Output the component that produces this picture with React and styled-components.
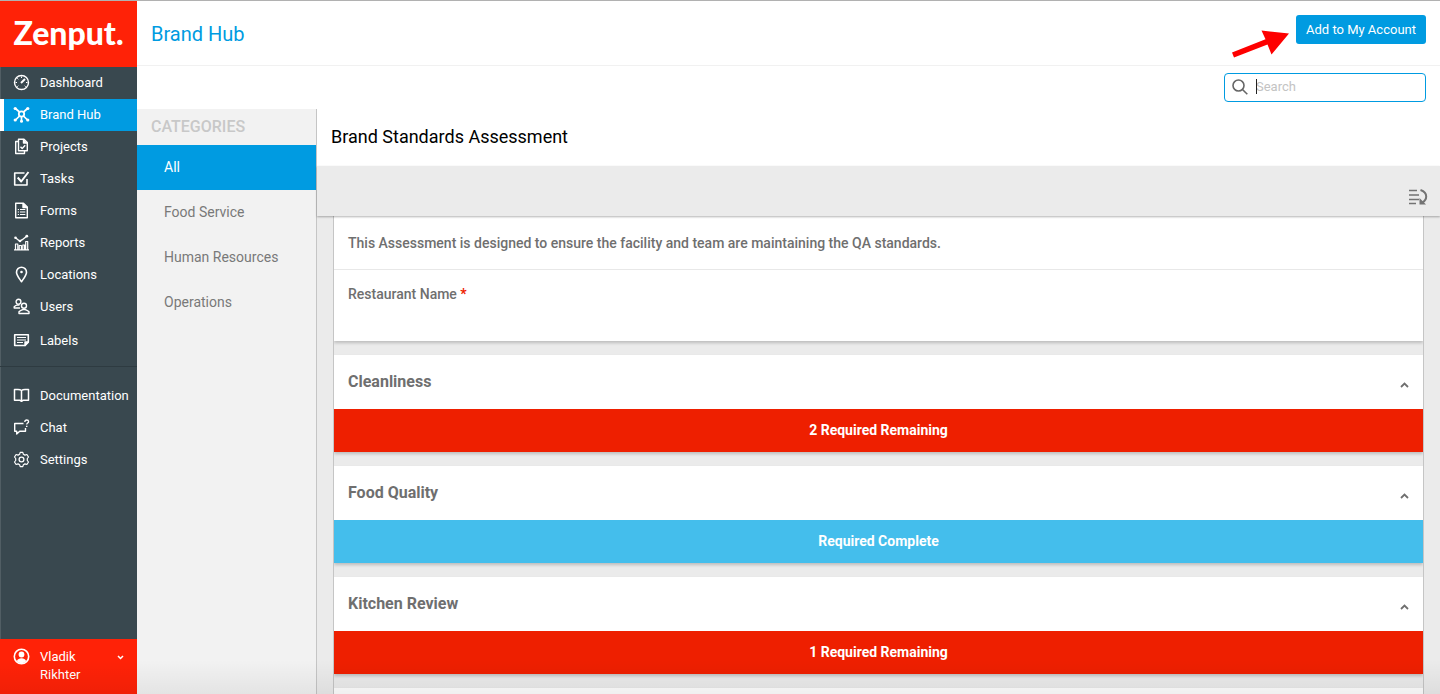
import React from 'react';
import styled, { createGlobalStyle, css } from 'styled-components';

const blue = '#009be1';
const red = '#ff2207';
const slate = '#39484f';
const grey = '#ebebeb';

const GlobalStyle = createGlobalStyle`
  *, *::before, *::after { box-sizing: border-box; }
  body {
    margin: 0;
    font-family: Roboto, "Liberation Sans", sans-serif;
    font-size: 13px;
    color: #6f6f6f;
    background: #fff;
  }
  button, input { font: inherit; }
  h1, h2, h3, p, ul { margin: 0; padding: 0; }
  ul { list-style: none; }
`;

const Shell = styled.div`
  position: relative;
  display: flex;
  height: 100vh;
  border-top: 1px solid #b1b1b1;
  overflow: hidden;
`;

const Sidebar = styled.aside`
  flex: 0 0 137px;
  display: flex;
  flex-direction: column;
  background: ${slate};
  box-shadow: inset 1px 0 0 rgba(255, 255, 255, 0.12);
`;

const Brand = styled.a`
  flex: 0 0 66px;
  display: flex;
  align-items: center;
  justify-content: center;
  padding-bottom: 2px;
  background: ${red};
  color: #fff;
  font-family: Lato, Roboto, sans-serif;
  font-size: 32px;
  font-weight: 900;
  line-height: 40px;
  text-decoration: none;
`;

const NavList = styled.ul`
  padding-bottom: ${p => (p.$divided ? '9px' : 0)};
  border-bottom: ${p => (p.$divided ? '1px solid #2e3b41' : '0')};
  padding-top: ${p => (p.$divided ? 0 : '13px')};
  li:nth-child(9) { padding-top: 2px; }
`;

const NavLink = styled.a`
  display: flex;
  align-items: center;
  gap: 10px;
  height: 32px;
  padding-left: 9px;
  border-left: 4px solid transparent;
  color: #fff;
  font-size: 13px;
  line-height: 18px;
  text-decoration: none;
  ${p => p.$active && css`
    background: ${blue};
    border-left-color: #fff;
  `}
`;

const NavIcon = styled.svg`
  flex: 0 0 17px;
  width: 17px;
  height: 19px;
  padding-bottom: 2px;
  fill: none;
  stroke: currentColor;
  stroke-width: 1.4;
  stroke-linejoin: round;
`;

const UserButton = styled.button`
  display: flex;
  align-items: flex-start;
  gap: 10px;
  margin-top: auto;
  height: 55px;
  padding: 9px 11px 0 13px;
  border: 0;
  background: ${red};
  color: #fff;
  font-size: 13px;
  line-height: 18px;
  text-align: left;
`;

const UserName = styled.span`
  flex: 1;
`;

const Chevron = styled.svg`
  width: 11px;
  height: 18px;
  fill: none;
  stroke: currentColor;
  stroke-width: ${p => p.$weight || 1.5};
`;

const Main = styled.main`
  flex: 1;
  min-width: 0;
  display: flex;
  flex-direction: column;
`;

const Header = styled.header`
  flex: 0 0 65px;
  display: flex;
  align-items: center;
  justify-content: space-between;
  padding: 0 14px 8px 14px;
  border-bottom: 1px solid #f1f1f1;
`;

const PageTitle = styled.h1`
  padding-top: 10px;
  color: ${blue};
  font-size: 20px;
  line-height: 24px;
  font-weight: 400;
`;

const Actions = styled.div`
  position: relative;
`;

const AddButton = styled.button`
  display: block;
  width: 130px;
  height: 29px;
  padding: 0;
  border: 0;
  border-radius: 3px;
  background: ${blue};
  color: #fff;
  font-size: 13px;
`;

const Pointer = styled.svg`
  position: absolute;
  right: 136px;
  top: 14px;
  width: 60px;
  height: 30px;
  fill: #fe0000;
`;

const SearchRow = styled.div`
  flex: 0 0 43px;
  display: flex;
  justify-content: flex-end;
  padding: 7px 14px 0;
`;

const SearchBox = styled.label`
  display: flex;
  align-items: center;
  gap: 8px;
  width: 202px;
  height: 29px;
  padding: 0 8px 2px 7px;
  border: 1px solid ${blue};
  border-radius: 4px;
  color: #666;
`;

const SearchField = styled.div`
  position: relative;
  flex: 1;
  display: flex;
  align-items: center;
`;

const Caret = styled.span`
  position: absolute;
  left: 0;
  width: 1px;
  height: 15px;
  background: #222;
`;

const SearchInput = styled.input`
  width: 100%;
  padding: 0;
  border: 0;
  outline: 0;
  background: transparent;
  font-size: 13px;
  line-height: 18px;
  &::placeholder { color: #c3c3c3; opacity: 1; }
`;

const Body = styled.div`
  flex: 1;
  min-height: 0;
  display: flex;
`;

const Categories = styled.nav`
  flex: 0 0 180px;
  background: #f2f2f2;
  border-right: 1px solid #c5c5c5;
`;

const CategoriesTitle = styled.h2`
  padding-left: 14px;
  color: #c8c8c8;
  font-size: 16px;
  font-weight: 500;
  line-height: 36px;
`;

const CategoryLink = styled.a`
  display: block;
  padding-left: 27px;
  line-height: 45px;
  font-size: 14px;
  text-decoration: none;
  background: ${p => (p.$active ? blue : 'transparent')};
  color: ${p => (p.$active ? '#fff' : '#797979')};
`;

const Preview = styled.section`
  flex: 1;
  min-width: 0;
  display: flex;
  flex-direction: column;
  background: ${grey};
`;

const FormTitle = styled.h2`
  flex: 0 0 57px;
  padding-left: 14px;
  background: #fff;
  color: #000;
  font-size: 18px;
  font-weight: 400;
  line-height: 56px;
`;

const Toolbar = styled.div`
  position: relative;
  z-index: 1;
  flex: 0 0 50px;
  display: flex;
  align-items: flex-end;
  justify-content: flex-end;
  padding: 0 12px 10px 0;
  background: ${grey};
  box-shadow: 0 1px 2px rgba(0, 0, 0, 0.3);
`;

const ToolButton = styled.button`
  display: block;
  padding: 0;
  border: 0;
  background: none;
  color: #737373;
  svg { display: block; }
`;

const Sheet = styled.div`
  flex: 1;
  min-height: 0;
  display: flex;
  flex-direction: column;
  gap: 14px;
  margin: 0 16px;
  border: 1px solid #c5c5c5;
  border-width: 0 1px;
  overflow: hidden;
  > * { flex-shrink: 0; }
`;

const Card = styled.article`
  background: #fff;
  box-shadow: 0 2px 3px rgba(0, 0, 0, 0.2);
`;

const Intro = styled.p`
  padding: 2px 14px 0;
  border-bottom: 1px solid #e8e8e8;
  font-size: 14px;
  font-weight: 500;
  line-height: 51px;
`;

const Question = styled.p`
  height: 71px;
  padding: 14px 14px 0;
  font-size: 14px;
  font-weight: 500;
  line-height: 20px;
`;

const Required = styled.span`
  color: #ee1c00;
  font-weight: 700;
`;

const SectionHead = styled.button`
  display: flex;
  align-items: center;
  justify-content: space-between;
  width: 100%;
  height: 54px;
  padding: 0 13px 0 14px;
  border: 0;
  background: #fff;
  color: #6f6f6f;
  svg { margin-top: 6px; }
`;

const SectionTitle = styled.h3`
  font-size: 16px;
  font-weight: 700;
  line-height: 24px;
`;

const Status = styled.p`
  background: ${p => (p.$done ? '#44beec' : '#ee1f00')};
  color: #fff;
  font-size: 14px;
  font-weight: 700;
  line-height: 43px;
  text-align: center;
`;

const BottomShade = styled.div`
  position: absolute;
  inset: auto 0 0 0;
  height: 34px;
  background: linear-gradient(transparent, rgba(0, 0, 0, 0.06));
  pointer-events: none;
`;

const icons = {
  gauge: (
    <>
      <circle cx="8.5" cy="8.5" r="7" />
      <path d="M8 9l4-4" strokeWidth="2" />
      <path d="M8.500 2.500v1.500M2.500 8.500h1.500M13 8.500h1.500M4.300 4.300l1 1M4.300 12.700l1-1M12.700 12.700l-1-1" strokeWidth="1" />
    </>
  ),
  hub: (
    <>
      <circle cx="8.500" cy="8" r="2.700" strokeWidth="1.800" />
      <path d="M6.500 6L2.500 2.500M10.500 6l4-3.500M6.500 10l-4 4M10.500 10l4 4M8.500 10.700V15" strokeWidth="1.700" />
      <g fill="currentColor" stroke="none">
        <circle cx="2.200" cy="2.500" r="1.600" /><circle cx="14.800" cy="2.500" r="1.600" />
        <circle cx="2.200" cy="14" r="1.600" /><circle cx="14.800" cy="14" r="1.600" />
        <circle cx="8.500" cy="15.200" r="1.500" />
      </g>
    </>
  ),
  projects: (
    <>
      <path d="M5.500 1.200h5.500l3.300 3.300v8.300H5.500z" />
      <path d="M10.500 1.200v3.800h3.800" fill="currentColor" />
      <path d="M5 3.500H2.700v12h8.800v-2.500" />
      <path d="M7.500 8.700l1.700 1.800 3-3.300" />
    </>
  ),
  tasks: (
    <>
      <path d="M14 9v6H1.700V3h9.800" strokeWidth="1.600" />
      <path d="M4.700 7.500l3.500 4 7.300-9.500" strokeWidth="2" />
    </>
  ),
  forms: (
    <>
      <path d="M2.700 1.200h7.800l3.800 3.800v10.800H2.700z" />
      <path d="M10 1.200V5.500h4.300" fill="currentColor" />
      <path d="M4.800 7.500h1.200M7 7.500h5.300M4.800 10h1.200M7 10h5.300M4.800 12.500h1.200M7 12.500h5.300" strokeWidth="1.200" />
    </>
  ),
  reports: (
    <>
      <path d="M1 15.800h15M2.500 15.500v-5.500h2.300v5.500M6.200 15.500v-4h2.200v4M9.800 15.500v-4.500h1.800v4.500M12.700 15.500v-8h2v8" strokeWidth="1.200" />
      <path d="M2.500 3.800l4.300 3.400 2.500-1.500L14 2" />
      <g fill="currentColor" stroke="none">
        <circle cx="2.500" cy="3.800" r="1.300" /><circle cx="7" cy="7" r="1.300" /><circle cx="13.800" cy="2.200" r="1.400" />
      </g>
    </>
  ),
  pin: (
    <>
      <path d="M8.500 15.700C6 12 3.500 9.200 3.500 6.200a5 5 0 0 1 10 0c0 3-2.500 5.800-5 9.500z" strokeWidth="1.600" />
      <circle cx="8.500" cy="6" r="1.300" fill="currentColor" stroke="none" />
    </>
  ),
  users: (
    <>
      <circle cx="5.500" cy="3.700" r="2.400" />
      <path d="M7 10H1.200v-1.300c1-1 2.300-1.600 3.500-1.800l1.800.1" />
      <circle cx="11" cy="7.700" r="2.500" />
      <path d="M6 15.500v-1.700c1-1.200 2.500-1.500 3.700-2.200h2.600c1.200.700 2.700 1 3.700 2.200v1.700z" />
    </>
  ),
  labels: (
    <>
      <path d="M1.700 2.700h13.600v7.500L12 13.500H1.700z" strokeWidth="1.600" />
      <path d="M15 10h-3v3.500z" fill="currentColor" />
      <path d="M4 5.500h9M4 8h9M4 10.500h6" strokeWidth="1.200" />
    </>
  ),
  book: <path d="M8.500 3.500C7.500 2.700 6.500 2.500 5 2.500H1.500v10.800H7l1.500 1 1.500-1h5.500V2.500H12c-1.500 0-2.500.2-3.500 1zM8.500 3.500v10.500" strokeWidth="1.500" />,
  chat: (
    <>
      <path d="M10.500 4.500H1.700v7.700h2v2.900l3-2.900h5.800V9" />
      <path d="M11.800 2.900c0-1.200.8-1.900 1.900-1.900s1.900.700 1.900 1.700c0 1.300-1.900 1.400-1.900 2.800" strokeWidth="1.300" />
      <path d="M13.700 6.700v1.300" strokeWidth="1.500" />
    </>
  ),
  gear: (
    <>
      <circle cx="8.500" cy="8.500" r="2.400" strokeWidth="1.300" />
      <path d="M7.200 1.300h2.600l.6 2 1.500.8 2-.6 1.600 2.500-1.200 1.500v2l1.200 1.500-1.600 2.500-2-.6-1.500.8-.6 2H7.200l-.6-2-1.500-.8-2 .6L1.500 11l1.200-1.500v-2L1.500 6l1.600-2.500 2 .6 1.500-.8z" strokeWidth="1.200" />
    </>
  ),
  user: (
    <>
      <circle cx="8.500" cy="8.500" r="7.200" strokeWidth="1.600" />
      <circle cx="8.500" cy="6.500" r="2.900" fill="currentColor" stroke="none" />
      <path d="M3.800 13.300c.8-2.300 2.500-3 4.700-3s3.900.7 4.700 3a6.500 6.500 0 0 1-9.400 0z" fill="currentColor" stroke="none" />
    </>
  ),
};

const Icon = ({ name }) => (
  <NavIcon viewBox="0 0 17 17" aria-hidden="true">{icons[name]}</NavIcon>
);

const primaryNav = [
  ['Dashboard', 'gauge'],
  ['Brand Hub', 'hub'],
  ['Projects', 'projects'],
  ['Tasks', 'tasks'],
  ['Forms', 'forms'],
  ['Reports', 'reports'],
  ['Locations', 'pin'],
  ['Users', 'users'],
  ['Labels', 'labels'],
];

const helpNav = [
  ['Documentation', 'book'],
  ['Chat', 'chat'],
  ['Settings', 'gear'],
];

const categories = ['All', 'Food Service', 'Human Resources', 'Operations'];

const sections = [
  { title: 'Cleanliness', status: '2 Required Remaining' },
  { title: 'Food Quality', status: 'Required Complete', done: true },
  { title: 'Kitchen Review', status: '1 Required Remaining' },
];

const NavItems = ({ items, active, divided }) => (
  <NavList $divided={divided}>
    {items.map(([label, icon]) => (
      <li key={label}>
        <NavLink href="#" $active={label === active}>
          <Icon name={icon} />
          {label}
        </NavLink>
      </li>
    ))}
  </NavList>
);

const FormSection = ({ title, status, done }) => (
  <Card>
    <SectionHead type="button">
      <SectionTitle>{title}</SectionTitle>
      <Chevron $weight={1.8} viewBox="0 0 11 18" aria-hidden="true">
        <path d="M2 11l3.500-3.500L9 11" />
      </Chevron>
    </SectionHead>
    <Status $done={done}>{status}</Status>
  </Card>
);

export default function App() {
  return (
    <>
      <GlobalStyle />
      <Shell>
        <Sidebar>
          <Brand href="#">Zenput.</Brand>
          <NavItems items={primaryNav} active="Brand Hub" divided />
          <NavItems items={helpNav} />
          <UserButton type="button">
            <Icon name="user" />
            <UserName>Vladik<br />Rikhter</UserName>
            <Chevron viewBox="0 0 11 18" aria-hidden="true">
              <path d="M3 8l2.500 2.500L8 8" />
            </Chevron>
          </UserButton>
        </Sidebar>
        <Main>
          <Header>
            <PageTitle>Brand Hub</PageTitle>
            <Actions>
              <Pointer viewBox="0 0 60 30" aria-hidden="true">
                <path d="M59 4.500L31.500 1.500l4 8.800L2 23.500l2 5 33.500-13 4 10z" />
              </Pointer>
              <AddButton type="button">Add to My Account</AddButton>
            </Actions>
          </Header>
          <SearchRow>
            <SearchBox>
              <svg width="16" height="16" viewBox="0 0 16 16" fill="none" stroke="currentColor" strokeWidth="1.600" aria-hidden="true">
                <circle cx="6.500" cy="6.500" r="5.500" />
                <path d="M10.500 10.500l4.800 4.700" />
              </svg>
              <SearchField>
                <SearchInput type="text" placeholder="Search" aria-label="Search" />
                <Caret />
              </SearchField>
            </SearchBox>
          </SearchRow>
          <Body>
            <Categories>
              <CategoriesTitle>CATEGORIES</CategoriesTitle>
              {categories.map(name => (
                <CategoryLink href="#" key={name} $active={name === 'All'}>{name}</CategoryLink>
              ))}
            </Categories>
            <Preview>
              <FormTitle>Brand Standards Assessment</FormTitle>
              <Toolbar>
                <ToolButton type="button" aria-label="Jump to section">
                  <svg width="20" height="18" viewBox="0 0 20 18" fill="none" stroke="currentColor" strokeWidth="1.600" aria-hidden="true">
                    <path d="M1 2.500h8M1 7h10M1 11.500h10M1 15.500h7" />
                    <path d="M12.500 2c3.700 1.200 5.700 3.700 5.700 6.500 0 2.300-1.300 4.500-3.700 6" strokeWidth="2" />
                    <path d="M11.500 10v6.500h6.500z" fill="currentColor" stroke="none" />
                  </svg>
                </ToolButton>
              </Toolbar>
              <Sheet>
                <Card>
                  <Intro>This Assessment is designed to ensure the facility and team are maintaining the QA standards.</Intro>
                  <Question>Restaurant Name <Required>*</Required></Question>
                </Card>
                {sections.map(s => <FormSection key={s.title} {...s} />)}
                <Card><SectionHead type="button" aria-label="Next section" /></Card>
              </Sheet>
            </Preview>
          </Body>
        </Main>
        <BottomShade />
      </Shell>
    </>
  );
}
